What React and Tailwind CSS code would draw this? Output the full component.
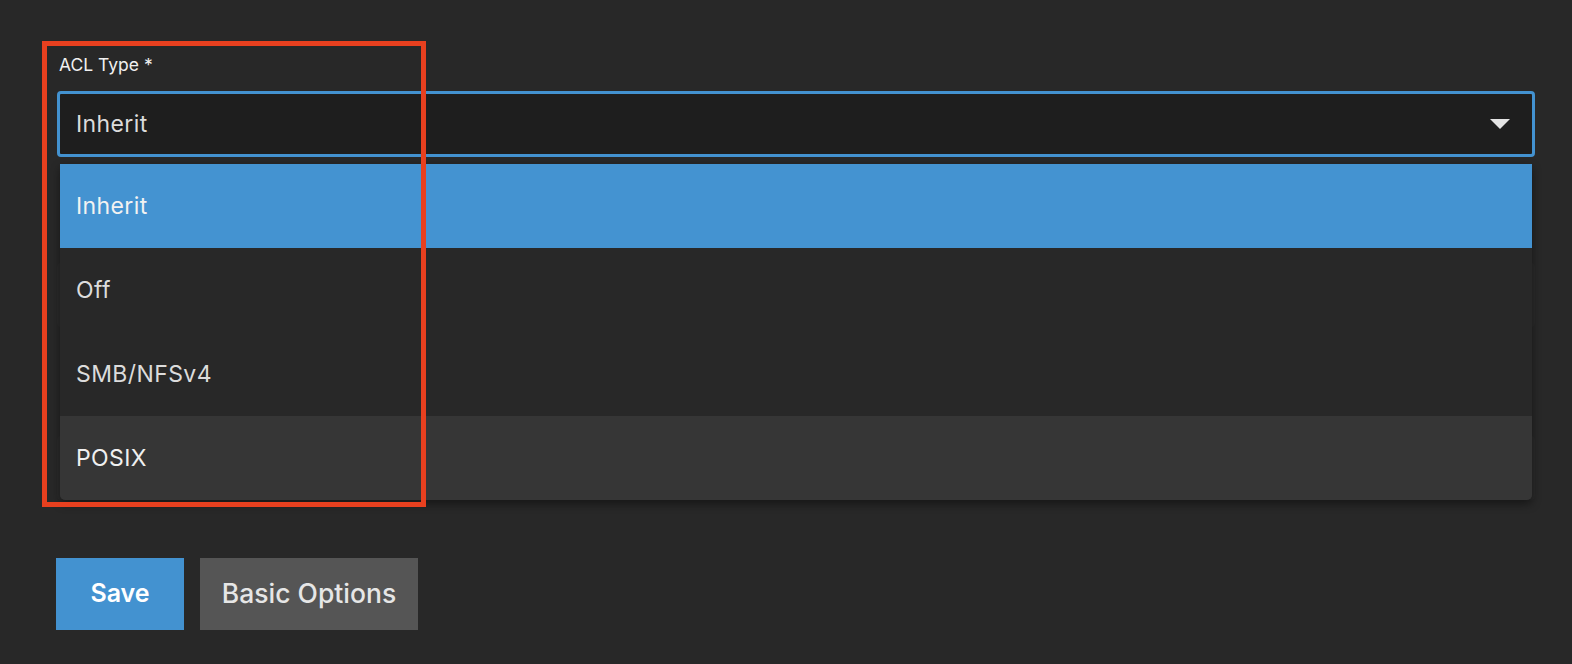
import React from "react";

const font = { fontFamily: 'Inter, "Noto Sans", sans-serif' };

export default function App() {
  const items = ["Inherit", "Off", "SMB/NFSv4", "POSIX"];
  return (
    <div className="relative w-[1572px] h-[664px] bg-[#282828] overflow-hidden" style={font}>
      <div className="flex flex-col pl-[57px] pr-[37px] pt-[55px]">
        <label className="pl-[2px] text-[17.5px] leading-[20px] text-[#f0f0f0]">ACL Type *</label>
        <div className="mt-[16px] h-[66px] rounded-[4px] border-[3px] border-[#4392d0] bg-[#1e1e1e] flex items-center justify-between pl-[16px] pr-[22px]">
          <span className="text-[23px] tracking-[0.4px] text-[#dcdcdc]">Inherit</span>
          <svg width="20" height="10" viewBox="0 0 20 10">
            <polygon points="0,0 20,0 10,10" fill="#e4e4e4" />
          </svg>
        </div>
        <div className="mt-[106px] h-[64px] rounded-[4px] bg-[#2b2b2b]"></div>
        <div className="mt-[109px] h-[64px] rounded-[4px] bg-[#2b2b2b]"></div>
        <div className="mt-[58px] flex gap-[16px] -ml-[1px]">
          <button className="w-[128px] h-[72px] bg-[#4392d0] text-white text-[25px] font-semibold">Save</button>
          <button className="w-[218px] h-[72px] bg-[#555555] text-[#e6e6e6] text-[26.5px] font-medium">Basic Options</button>
        </div>
      </div>

      <div className="absolute left-[60px] top-[164px] w-[1472px] rounded-b-[5px] overflow-hidden bg-[#282828] shadow-[0_4px_10px_rgba(0,0,0,0.45)]">
        {items.map((it, i) => (
          <div
            key={it}
            className={
              "h-[84px] flex items-center pl-[16px] text-[23px] tracking-[0.4px] " +
              (i === 0
                ? "bg-[#4493d1] text-[#f2f2f2]"
                : i === 3
                ? "bg-[#363636] text-[#f0f0f0]"
                : "bg-[#282828] text-[#dcdcdc]")
            }
          >
            {it}
          </div>
        ))}
      </div>

      <div className="absolute left-[42px] top-[41px] w-[384px] h-[466px] border-[5px] border-[#e8401f] pointer-events-none"></div>
    </div>
  );
}
